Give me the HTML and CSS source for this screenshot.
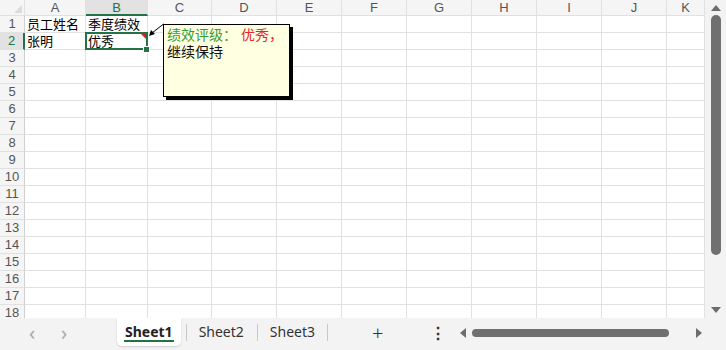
FILE: index.html
```html
<!DOCTYPE html>
<html lang="zh-CN">
<head>
    <meta charset="UTF-8">
    <meta name="viewport" content="width=device-width, initial-scale=1.0">
    <title>员工绩效</title>
    <link rel="stylesheet" href="styles.css">
</head>
<body>
    <div class="app">
        <div class="main">
            <div class="sheet">
                <div class="row head">
                    <div class="corner"></div>
                    <div class="ch">A</div><div class="ch active">B</div><div class="ch">C</div><div class="ch">D</div>
                    <div class="ch">E</div><div class="ch">F</div><div class="ch">G</div><div class="ch">H</div>
                    <div class="ch">I</div><div class="ch">J</div><div class="ch">K</div>
                </div>
                <div class="row">
                    <div class="rh">1</div><div class="c">员工姓名</div><div class="c">季度绩效</div>
                    <div class="c"></div><div class="c"></div><div class="c"></div><div class="c"></div><div class="c"></div><div class="c"></div><div class="c"></div><div class="c"></div><div class="c"></div>
                </div>
                <div class="row">
                    <div class="rh active">2</div><div class="c">张明</div><div class="c selected">优秀<span class="note-mark"></span></div>
                    <div class="c"></div><div class="c"></div><div class="c"></div><div class="c"></div><div class="c"></div><div class="c"></div><div class="c"></div><div class="c"></div><div class="c"></div>
                </div>
                <div class="row"><div class="rh">3</div><div class="c"></div><div class="c"></div><div class="c"></div><div class="c"></div><div class="c"></div><div class="c"></div><div class="c"></div><div class="c"></div><div class="c"></div><div class="c"></div><div class="c"></div></div>
                <div class="row"><div class="rh">4</div><div class="c"></div><div class="c"></div><div class="c"></div><div class="c"></div><div class="c"></div><div class="c"></div><div class="c"></div><div class="c"></div><div class="c"></div><div class="c"></div><div class="c"></div></div>
                <div class="row"><div class="rh">5</div><div class="c"></div><div class="c"></div><div class="c"></div><div class="c"></div><div class="c"></div><div class="c"></div><div class="c"></div><div class="c"></div><div class="c"></div><div class="c"></div><div class="c"></div></div>
                <div class="row"><div class="rh">6</div><div class="c"></div><div class="c"></div><div class="c"></div><div class="c"></div><div class="c"></div><div class="c"></div><div class="c"></div><div class="c"></div><div class="c"></div><div class="c"></div><div class="c"></div></div>
                <div class="row"><div class="rh">7</div><div class="c"></div><div class="c"></div><div class="c"></div><div class="c"></div><div class="c"></div><div class="c"></div><div class="c"></div><div class="c"></div><div class="c"></div><div class="c"></div><div class="c"></div></div>
                <div class="row"><div class="rh">8</div><div class="c"></div><div class="c"></div><div class="c"></div><div class="c"></div><div class="c"></div><div class="c"></div><div class="c"></div><div class="c"></div><div class="c"></div><div class="c"></div><div class="c"></div></div>
                <div class="row"><div class="rh">9</div><div class="c"></div><div class="c"></div><div class="c"></div><div class="c"></div><div class="c"></div><div class="c"></div><div class="c"></div><div class="c"></div><div class="c"></div><div class="c"></div><div class="c"></div></div>
                <div class="row"><div class="rh">10</div><div class="c"></div><div class="c"></div><div class="c"></div><div class="c"></div><div class="c"></div><div class="c"></div><div class="c"></div><div class="c"></div><div class="c"></div><div class="c"></div><div class="c"></div></div>
                <div class="row"><div class="rh">11</div><div class="c"></div><div class="c"></div><div class="c"></div><div class="c"></div><div class="c"></div><div class="c"></div><div class="c"></div><div class="c"></div><div class="c"></div><div class="c"></div><div class="c"></div></div>
                <div class="row"><div class="rh">12</div><div class="c"></div><div class="c"></div><div class="c"></div><div class="c"></div><div class="c"></div><div class="c"></div><div class="c"></div><div class="c"></div><div class="c"></div><div class="c"></div><div class="c"></div></div>
                <div class="row"><div class="rh">13</div><div class="c"></div><div class="c"></div><div class="c"></div><div class="c"></div><div class="c"></div><div class="c"></div><div class="c"></div><div class="c"></div><div class="c"></div><div class="c"></div><div class="c"></div></div>
                <div class="row"><div class="rh">14</div><div class="c"></div><div class="c"></div><div class="c"></div><div class="c"></div><div class="c"></div><div class="c"></div><div class="c"></div><div class="c"></div><div class="c"></div><div class="c"></div><div class="c"></div></div>
                <div class="row"><div class="rh">15</div><div class="c"></div><div class="c"></div><div class="c"></div><div class="c"></div><div class="c"></div><div class="c"></div><div class="c"></div><div class="c"></div><div class="c"></div><div class="c"></div><div class="c"></div></div>
                <div class="row"><div class="rh">16</div><div class="c"></div><div class="c"></div><div class="c"></div><div class="c"></div><div class="c"></div><div class="c"></div><div class="c"></div><div class="c"></div><div class="c"></div><div class="c"></div><div class="c"></div></div>
                <div class="row"><div class="rh">17</div><div class="c"></div><div class="c"></div><div class="c"></div><div class="c"></div><div class="c"></div><div class="c"></div><div class="c"></div><div class="c"></div><div class="c"></div><div class="c"></div><div class="c"></div></div>
                <div class="row"><div class="rh">18</div><div class="c"></div><div class="c"></div><div class="c"></div><div class="c"></div><div class="c"></div><div class="c"></div><div class="c"></div><div class="c"></div><div class="c"></div><div class="c"></div><div class="c"></div></div>

                <!-- 批注 -->
                <svg class="note-line" width="20" height="14" viewBox="0 0 20 14">
                    <line x1="4" y1="10" x2="15.5" y2="1" stroke="#000" stroke-width="1"/>
                    <polygon points="1,13 3,7 7,11" fill="#000"/>
                </svg>
                <div class="note">
                    <span class="green">绩效评级：</span><span class="red">优秀，</span><br>继续保持
                </div>
            </div>
            <div class="vscroll">
                <span class="arrow up"></span>
                <div class="vthumb"></div>
                <span class="arrow down"></span>
            </div>
        </div>

        <div class="tabbar">
            <div class="nav">
                <span class="nav-btn">&#x2039;</span>
                <span class="nav-btn">&#x203A;</span>
            </div>
            <div class="tabs">
                <div class="tab active">Sheet1</div>
                <div class="tab">Sheet2</div>
                <div class="tab">Sheet3</div>
            </div>
            <div class="add">+</div>
            <div class="more">&#x22EE;</div>
            <div class="hscroll">
                <span class="arrow left"></span>
                <div class="hthumb"></div>
                <span class="arrow right"></span>
            </div>
        </div>
    </div>
</body>
</html>
```

FILE: styles.css
```css
body {
    margin: 0;
    font-family: "Noto Sans", "Noto Sans CJK SC", sans-serif;
    background: #fff;
}
.app {
    width: 726px;
    height: 350px;
    display: flex;
    flex-direction: column;
    overflow: hidden;
}
.main {
    display: flex;
    height: 318px;
    overflow: hidden;
}
.sheet {
    position: relative;
    width: 705px;
    overflow: hidden;
}
.row {
    display: grid;
    grid-template-columns: 25px 61px 62px 64px repeat(7, 65px) 38px;
    height: 17px;
}
.row.head {
    height: 16px;
}
.row > div {
    box-sizing: border-box;
    border-right: 1px solid #e1e1e1;
    border-bottom: 1px solid #e1e1e1;
}
.corner {
    background: #f5f5f5;
    position: relative;
}
.corner::after {
    content: "";
    position: absolute;
    right: 2px;
    bottom: 2px;
    border-left: 8px solid transparent;
    border-bottom: 8px solid #dcdcdc;
}
.ch {
    background: #f5f5f5;
    color: #555;
    font-family: "Liberation Sans", Arial, sans-serif;
    font-size: 13px;
    line-height: 15px;
    text-align: center;
    overflow: hidden;
}
.ch.active {
    background: #e2e2e2;
    color: #217346;
    border-bottom: 2px solid #217346 !important;
}
.rh {
    background: #f5f5f5;
    color: #555;
    font-family: "Liberation Sans", Arial, sans-serif;
    font-size: 13px;
    line-height: 16px;
    text-align: center;
    border-right: 1px solid #d0d0d0 !important;
    overflow: hidden;
}
.rh.active {
    background: #e2e2e2;
    color: #217346;
    border-right: 2px solid #217346 !important;
}
.c {
    font-family: "Noto Sans CJK SC", sans-serif;
    font-size: 13px;
    line-height: 16px;
    color: #000;
    padding-left: 2px;
    white-space: nowrap;
}
.selected {
    position: relative;
}
.selected::before {
    content: "";
    position: absolute;
    top: -1px;
    left: -1px;
    right: -1px;
    bottom: -1px;
    border: 2px solid #217346;
}
.selected::after {
    content: "";
    position: absolute;
    right: -3px;
    bottom: -4px;
    width: 5px;
    height: 5px;
    background: #217346;
    border: 1px solid #fff;
}
.note-mark {
    position: absolute;
    top: 1px;
    right: 1px;
    border-left: 5px solid transparent;
    border-top: 5px solid #d42020;
}
.note-line {
    position: absolute;
    left: 148px;
    top: 23px;
}
.note {
    position: absolute;
    left: 163px;
    top: 24px;
    width: 127px;
    height: 73px;
    box-sizing: border-box;
    padding: 1px 3px;
    background: #ffffe1;
    border: 1px solid #000;
    box-shadow: 3px 3px 0 #000;
    font-family: "Noto Sans CJK SC", sans-serif;
    font-size: 14px;
    line-height: 17px;
    color: #111;
}
.green {
    color: #3a9a2e;
}
.red {
    color: #e8262a;
    margin-left: 4px;
}
.vscroll {
    width: 21px;
    background: #f3f3f3;
    display: flex;
    flex-direction: column;
    align-items: center;
    padding-top: 5px;
}
.vthumb {
    width: 10px;
    height: 240px;
    margin: 4px 0 auto;
    background: #707070;
    border-radius: 5px;
}
.arrow {
    width: 0;
    height: 0;
}
.arrow.up {
    border-left: 5px solid transparent;
    border-right: 5px solid transparent;
    border-bottom: 6px solid #6d6d6d;
}
.arrow.down {
    margin-bottom: 5px;
    border-left: 5px solid transparent;
    border-right: 5px solid transparent;
    border-top: 6px solid #6d6d6d;
}
.arrow.left {
    border-top: 5px solid transparent;
    border-bottom: 5px solid transparent;
    border-right: 6px solid #6d6d6d;
}
.arrow.right {
    border-top: 5px solid transparent;
    border-bottom: 5px solid transparent;
    border-left: 6px solid #6d6d6d;
}
.tabbar {
    flex: 1;
    display: flex;
    align-items: flex-start;
    background: #f3f3f3;
    font-family: "Noto Sans", sans-serif;
}
.nav {
    display: flex;
    width: 117px;
    padding-left: 26px;
    box-sizing: border-box;
    gap: 20px;
}
.nav-btn {
    color: #a8a8a8;
    font-size: 20px;
    line-height: 30px;
    width: 12px;
    text-align: center;
}
.tabs {
    display: flex;
    align-items: flex-start;
}
.tab {
    font-size: 14px;
    color: #333;
    height: 28px;
    line-height: 28px;
    padding: 0 13px;
    position: relative;
}
.tab + .tab::before {
    content: "";
    position: absolute;
    left: 0;
    top: 6px;
    height: 17px;
    border-left: 1px solid #c8c8c8;
}
.tab:last-child::after {
    content: "";
    position: absolute;
    right: 0;
    top: 6px;
    height: 17px;
    border-left: 1px solid #c8c8c8;
}
.tab.active {
    background: #fff;
    font-weight: bold;
    color: #222;
    padding: 0 8px;
    margin-right: 5px;
    border-radius: 0 0 5px 5px;
    box-shadow: 0 1px 2px rgba(0, 0, 0, 0.15);
}
.tab.active::after {
    content: "";
    position: absolute;
    left: 7px;
    right: 7px;
    bottom: 4px;
    height: 2px;
    background: #217346;
}
.add {
    margin-left: 44px;
    font-size: 20px;
    line-height: 30px;
    color: #333;
    font-weight: 300;
}
.more {
    margin-left: 47px;
    font-size: 16px;
    line-height: 30px;
    color: #333;
    font-weight: bold;
}
.hscroll {
    margin-left: 14px;
    display: flex;
    align-items: center;
    height: 30px;
    width: 242px;
}
.hthumb {
    width: 197px;
    height: 8px;
    margin: 0 auto 0 6px;
    background: #707070;
    border-radius: 4px;
}
```
